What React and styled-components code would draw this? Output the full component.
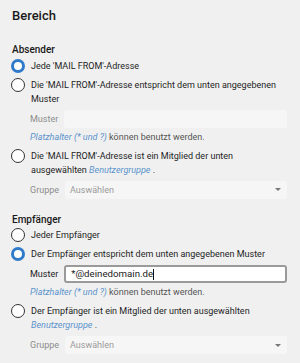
import React from 'react'
import styled, { createGlobalStyle } from 'styled-components'

const Global = createGlobalStyle`
body {
  margin:0;
  background:#f0f0f0;
  font-family:Roboto, "Liberation Sans", sans-serif;
  color:#222;
}
`

const Page = styled.div`
padding:6px 13px 0 11px;
`
const Title = styled.h1`
font-size:13px;
line-height:20px;
font-weight:500;
margin:0 0 17px 1px;
color:#1a1a1a;
`
const Section = styled.div`
margin-bottom:14px;
`
const SectionTitle = styled.h2`
font-size:10px;
line-height:14px;
font-weight:500;
margin:1px 0 -1px 1px;
color:#1a1a1a;
`
const Option = styled.label`
display:flex;
align-items:flex-start;
gap:6px;
font-size:9px;
line-height:14px;
padding:2.5px 0;
color:#1e1e1e;
`
const Radio = styled.span`
flex:none;
width:14px;
height:14px;
box-sizing:border-box;
border-radius:50%;
background:#fff;
border:${p => p.checked ? '3.5px solid #2f7bc9' : '1.3px solid #333'};
`
const Link = styled.span`
color:#5b93cc;
font-style:italic;
`
const FieldRow = styled.div`
display:flex;
align-items:center;
gap:6px;
margin:1.5px 0 0 19px;
font-size:9px;
color:${p => p.disabled ? '#8d8d8d' : '#222'};
`
const Input = styled.div`
flex:1;
display:flex;
align-items:center;
height:${p => p.active ? '14px' : '18px'};
border-radius:3px;
background:${p => p.active ? '#fff' : '#f6f6f6'};
border:${p => p.active ? '2px solid #9a9a9a' : 'none'};
font-size:9.7px;
line-height:14px;
padding:0 5px;
color:#222;
`
const Cursor = styled.span`
width:1px;
height:11px;
background:#111;
`
const Select = styled.div`
flex:1;
height:18px;
display:flex;
align-items:center;
justify-content:space-between;
border-radius:3px;
background:#f6f6f6;
padding:0 6px 0 5px;
color:#9a9a9a;
`
const Caret = styled.span`
width:0;
height:0;
border-left:3px solid transparent;
border-right:3px solid transparent;
border-top:3px solid #777;
`
const Hint = styled.div`
margin:2px 0 2.5px 19px;
font-size:9px;
line-height:14px;
color:#555;
`

function App() {
  return (
    <Page>
      <Global />
      <Title>Bereich</Title>
      <Section>
        <SectionTitle>Absender</SectionTitle>
        <Option><Radio checked /><span>Jede 'MAIL FROM'-Adresse</span></Option>
        <Option><Radio /><span>Die 'MAIL FROM'-Adresse entspricht dem unten angegebenen Muster</span></Option>
        <FieldRow disabled>Muster<Input /></FieldRow>
        <Hint><Link>Platzhalter (* und ?)</Link> können benutzt werden.</Hint>
        <Option><Radio /><span>Die 'MAIL FROM'-Adresse ist ein Mitglied der unten ausgewählten <Link>Benutzergruppe</Link> .</span></Option>
        <FieldRow disabled>Gruppe<Select>Auswählen<Caret /></Select></FieldRow>
      </Section>
      <Section>
        <SectionTitle>Empfänger</SectionTitle>
        <Option><Radio /><span>Jeder Empfänger</span></Option>
        <Option><Radio checked /><span>Der Empfänger entspricht dem unten angegebenen Muster</span></Option>
        <FieldRow>Muster<Input active>*@deinedomain.de<Cursor /></Input></FieldRow>
        <Hint><Link>Platzhalter (* und ?)</Link> können benutzt werden.</Hint>
        <Option><Radio /><span>Der Empfänger ist ein Mitglied der unten ausgewählten <Link>Benutzergruppe</Link> .</span></Option>
        <FieldRow disabled>Gruppe<Select>Auswählen<Caret /></Select></FieldRow>
      </Section>
    </Page>
  )
}

export default App
